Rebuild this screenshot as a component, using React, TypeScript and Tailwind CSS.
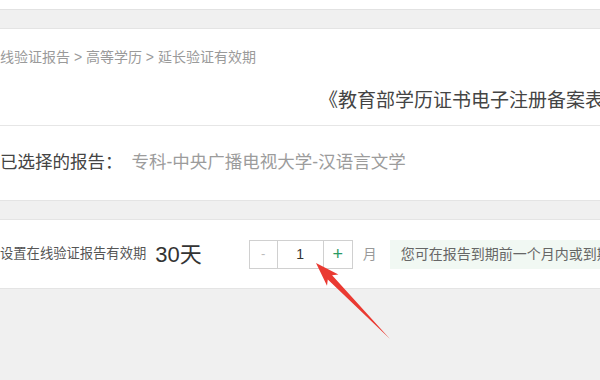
export default function App() {
  return (
    <div
      className="relative w-[600px] h-[380px] overflow-hidden bg-[#f0f0f0] flex flex-col"
      style={{ fontFamily: '"Liberation Sans", "Noto Sans CJK SC", sans-serif' }}
    >
      <div className="h-[10px] bg-white border-b border-[#e2e2e2] shrink-0" />
      <div className="h-[18px] shrink-0" />

      <div className="h-[173px] shrink-0 bg-white border-y border-[#e4e4e4] flex flex-col">
        <div className="h-[97px] border-b border-[#e6e6e6] flex flex-col">
          <div className="pt-[19px] h-[40px] text-[14px] leading-[18px] text-[#9a9a9a] whitespace-nowrap">
            线验证报告 &gt; 高等学历 &gt; 延长验证有效期
          </div>
          <div className="pl-[319px] pt-[20px] text-[19px] leading-[24px] text-[#444] whitespace-nowrap">
            《教育部学历证书电子注册备案表》在线验证报告
          </div>
        </div>
        <div className="flex-1 flex items-center text-[17.5px] whitespace-nowrap pb-[2px]">
          <span className="text-[#444]">已选择的报告：</span>
          <span className="ml-[9px] text-[#9c9c9c]">专科-中央广播电视大学-汉语言文学</span>
        </div>
      </div>

      <div className="h-[18px] shrink-0" />

      <div className="h-[70px] shrink-0 bg-white border-y border-[#e4e4e4] flex items-center whitespace-nowrap">
        <span className="text-[13.3px] text-[#555]">设置在线验证报告有效期</span>
        <span className="ml-[9px] text-[22px] text-[#333]">30天</span>
        <div className="ml-[47px] flex h-[29px] border border-[#d0d0d0]">
          <div className="w-[28px] flex items-center justify-center text-[13px] text-[#bbb] border-r border-[#d0d0d0]">-</div>
          <div className="w-[46px] flex items-center justify-center text-[14px] text-[#333] border-r border-[#d0d0d0]">1</div>
          <div className="w-[28px] flex items-center justify-center text-[18px] text-[#2a9a63]">+</div>
        </div>
        <span className="ml-[10px] text-[14px] text-[#999]">月</span>
        <div className="ml-[13px] h-[29px] flex-1 bg-[#f1f8f3] flex items-center pl-[11px] text-[14px] text-[#666]">
          您可在报告到期前一个月内或到期后申请延长
        </div>
      </div>

      <svg className="absolute left-0 top-0" width="600" height="380" viewBox="0 0 600 380">
        <polygon
          points="316,263 338.4,274.6 332.1,275.2 390,339 327.8,279.4 327,285.8"
          fill="#ea3a32"
        />
      </svg>
    </div>
  )
}
